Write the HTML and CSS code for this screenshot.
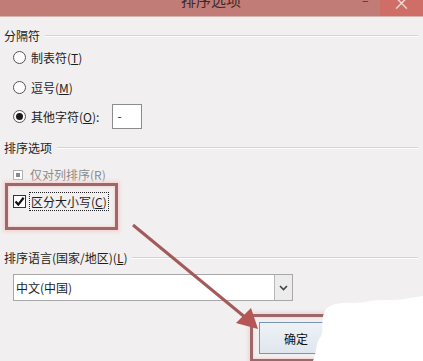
FILE: index.html
```html
<!DOCTYPE html>
<html lang="zh-CN">
<head>
    <meta charset="UTF-8">
    <meta name="viewport" content="width=device-width, initial-scale=1.0">
    <title>排序选项</title>
    <link rel="stylesheet" href="styles.css">
</head>
<body>

    <div class="dialog">
        <div class="titlebar">
            <span class="title">排序选项</span>
            <span class="min">–</span>
            <span class="close">×</span>
        </div>

        <div class="content">
            <div class="group-head"><span>分隔符</span><div class="rule"></div></div>

            <div class="radio-row"><span class="radio"></span><span>制表符(<u>T</u>)</span></div>
            <div class="radio-row"><span class="radio"></span><span>逗号(<u>M</u>)</span></div>
            <div class="radio-row last">
                <span class="radio on"></span><span>其他字符(<u>O</u>):</span>
                <div class="char-box">-</div>
            </div>

            <div class="group-head second"><span>排序选项</span><div class="rule"></div></div>

            <div class="check-row disabled"><span class="check off"></span><span>仅对列排序(R)</span></div>
            <div class="check-row">
                <span class="check">
                    <svg width="11" height="11" viewBox="0 0 11 11"><path d="M1.5 5.5 L4.3 8.6 L9.6 1.8" fill="none" stroke="#111" stroke-width="2.2"/></svg>
                </span>
                <span class="focus">区分大小写(<u>C</u>)</span>
            </div>

            <div class="group-head third"><span>排序语言(国家/地区)(<u>L</u>)</span><div class="rule"></div></div>

            <div class="select">
                <span class="select-text">中文(中国)</span>
                <span class="select-btn">
                    <svg width="9" height="6" viewBox="0 0 9 6"><path d="M1 1 L4.5 4.5 L8 1" fill="none" stroke="#444" stroke-width="1.6"/></svg>
                </span>
            </div>

            <div class="footer">
                <button class="ok">确定</button>
            </div>
        </div>

        <!-- пометки поверх скриншота -->
        <div class="mark mark-check"></div>
        <div class="mark mark-ok"></div>
        <svg class="arrow" width="423" height="361" viewBox="0 0 423 361">
            <line x1="133" y1="225" x2="246" y2="318" stroke="#a25a5b" stroke-width="3"/>
            <path d="M258 329 L236 323 L251 308 Z" fill="#b55556"/>
        </svg>
        <svg class="blot" width="110" height="65" viewBox="0 0 110 65">
            <path d="M14 12 C24 4 40 8 52 6 C66 2 82 6 96 2 L110 0 L110 65 L0 65 C4 56 2 48 8 40 C12 32 6 22 14 12 Z" fill="#fff"/>
        </svg>
    </div>

</body>
</html>
```

FILE: styles.css
```css
body {
    margin: 0;
    background-color: #f1efef;
    font-family: "Noto Sans CJK SC", "Noto Sans", sans-serif;
    font-size: 12px;
    color: #1e1e1e;
}
.dialog {
    position: relative;
    width: 423px;
    height: 361px;
    overflow: hidden;
}
.titlebar {
    height: 16px;
    background-color: #c17c77;
    position: relative;
    overflow: hidden;
    border-bottom: 1px solid #d9b3b0;
}
.title {
    position: absolute;
    left: 181px;
    top: -11px;
    font-size: 15px;
    color: #3b2b2b;
}
.min {
    position: absolute;
    left: 362px;
    top: -9px;
    font-size: 12px;
    color: #4a3030;
}
.close {
    position: absolute;
    left: 380px;
    top: 0;
    width: 43px;
    height: 16px;
    background-color: #cf6d67;
    color: #f5dede;
    font-size: 18px;
    line-height: 4px;
    text-align: center;
}
.content {
    padding: 12px 0 0 4px;
}
.group-head {
    display: flex;
    align-items: center;
    height: 13px;
    line-height: 13px;
    gap: 5px;
}
.group-head .rule {
    flex: 1;
    margin-right: 5px;
    border-top: 1px solid #d6d3d3;
    border-bottom: 1px solid #fff;
}
.group-head.second {
    margin-top: 11px;
}
.group-head.third {
    margin-top: 36px;
}
.radio-row {
    display: flex;
    align-items: center;
    height: 30px;
    padding-left: 9px;
    gap: 5px;
}
.radio-row:first-of-type {
    margin-top: -1px;
}
.radio-row.last {
    height: 28px;
}
.radio {
    width: 11px;
    height: 11px;
    border: 1px solid #555;
    border-radius: 50%;
    background: #fff;
    display: flex;
    align-items: center;
    justify-content: center;
}
.radio.on::after {
    content: "";
    width: 7px;
    height: 7px;
    border-radius: 50%;
    background: #1a1a1a;
}
.char-box {
    width: 30px;
    height: 25px;
    margin-left: 8px;
    border: 1px solid #8c8c8c;
    background: #fff;
    line-height: 21px;
    padding-left: 4px;
    box-sizing: border-box;
}
.check-row {
    display: flex;
    align-items: center;
    height: 27px;
    padding-left: 9px;
    gap: 3px;
}
.check-row.disabled {
    margin-top: 7px;
    color: #8d8b8b;
    gap: 7px;
}
.check {
    width: 11px;
    height: 11px;
    border: 1px solid #333;
    background: #fff;
    display: flex;
    align-items: center;
    justify-content: center;
}
.check.off {
    width: 8px;
    height: 8px;
    border-color: #b0b0b0;
}
.check.off::after {
    content: "";
    width: 4px;
    height: 4px;
    background: #8a8a8a;
}
.focus {
    border: 1px dotted #222;
    padding: 0 1px;
    line-height: 17px;
}
.select {
    display: flex;
    margin: 10px 0 0 9px;
    width: 280px;
    height: 27px;
    box-sizing: border-box;
    border: 1px solid #a8a8a8;
    background: #fff;
}
.select-text {
    flex: 1;
    line-height: 25px;
    padding-left: 2px;
}
.select-btn {
    width: 17px;
    border-left: 1px solid #b8b8b8;
    background: #ececec;
    display: flex;
    align-items: center;
    justify-content: center;
}
.footer {
    padding: 21px 0 0 255px;
}
.ok {
    width: 74px;
    height: 32px;
    border: 1px solid #7b95b8;
    background: linear-gradient(#eef2f6, #dfe6ee);
    font-family: "Noto Sans CJK SC", sans-serif;
    font-size: 12px;
    color: #111;
}
.mark {
    position: absolute;
    border: 3px solid #9c6869;
    box-shadow: 0 0 3px 2px #f3d6d6, inset 0 0 2px 1px #f3d6d6;
}
.mark-check {
    left: 5px;
    top: 183px;
    width: 107px;
    height: 41px;
}
.mark-ok {
    left: 250px;
    top: 314px;
    width: 79px;
    height: 42px;
}
.arrow {
    position: absolute;
    left: 0;
    top: 0;
}
.blot {
    position: absolute;
    left: 313px;
    top: 296px;
}
```
